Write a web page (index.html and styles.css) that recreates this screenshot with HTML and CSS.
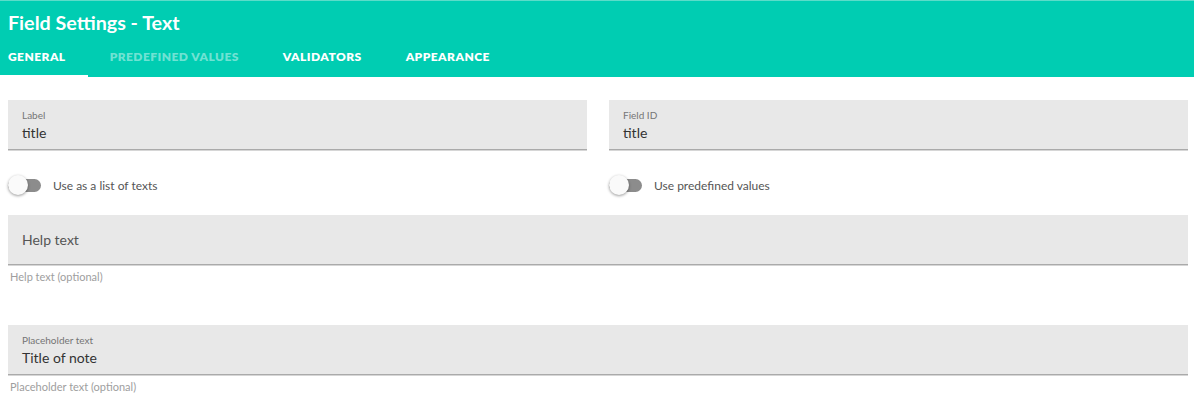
FILE: index.html
```html
<!DOCTYPE html>
<html>
<head>
<meta charset="utf-8">
<link rel="stylesheet" href="styles.css">
</head>
<body>
<div class="page">
  <header class="header">
    <h1 class="title">Field Settings - Text</h1>
    <nav class="tabs">
      <div class="tab active">General</div>
      <div class="tab disabled">Predefined values</div>
      <div class="tab">Validators</div>
      <div class="tab">Appearance</div>
    </nav>
  </header>
  <main class="content">
    <div class="row two">
      <div class="field">
        <div class="field-label">Label</div>
        <div class="field-value">title</div>
      </div>
      <div class="field">
        <div class="field-label">Field ID</div>
        <div class="field-value">title</div>
      </div>
    </div>
    <div class="row two toggles">
      <label class="switch"><span class="track"><span class="thumb"></span></span><span class="switch-text">Use as a list of texts</span></label>
      <label class="switch"><span class="track"><span class="thumb"></span></span><span class="switch-text">Use predefined values</span></label>
    </div>
    <div class="block">
      <div class="field empty">
        <div class="field-placeholder">Help text</div>
      </div>
      <div class="hint">Help text (optional)</div>
    </div>
    <div class="block last">
      <div class="field">
        <div class="field-label">Placeholder text</div>
        <div class="field-value">Title of note</div>
      </div>
      <div class="hint">Placeholder text (optional)</div>
    </div>
  </main>
</div>
</body>
</html>
```
FILE: styles.css
```css
* { box-sizing: border-box; }
html, body { margin: 0; padding: 0; background: #fff; }
body {
  font-family: Lato, "Open Sans", sans-serif;
  color: #333;
  width: 1196px;
  height: 398px;
  overflow: hidden;
}
.page { width: 1196px; }
.header {
  width: 1194px;
  height: 77px;
  background: #00cdb2;
  border-top: 1px solid #5cdcc9;
  display: flex;
  flex-direction: column;
}
.title {
  margin: 0;
  padding: 8px 0 0 8px;
  height: 36px;
  font-size: 19.7px;
  line-height: 27px;
  font-weight: 700;
  color: #fff;
}
.tabs {
  display: flex;
  margin-left: -14px;
  height: 40px;
}
.tab {
  padding: 0 22px;
  font-size: 12px;
  font-weight: 800;
  letter-spacing: 0.45px;
  text-transform: uppercase;
  color: #fff;
  line-height: 39px;
  border-bottom: 2px solid transparent;
}
.tab.active { border-bottom-color: #fff; }
.tab.disabled { color: rgba(255,255,255,0.45); }
.content {
  padding: 23px 8px 0 8px;
  width: 1196px;
}
.row.two {
  display: grid;
  grid-template-columns: 1fr 1fr;
  column-gap: 22px;
  width: 1180px;
}
.field {
  background: #e8e8e8;
  height: 50px;
  border-bottom: 1px solid #aaa;
  box-shadow: 0 1px 0 #d6d6d6;
  padding: 9px 14px 0 14px;
}
.field-label {
  font-size: 10px;
  line-height: 13px;
  color: #757575;
}
.field-value {
  font-size: 14px;
  line-height: 20px;
  margin-top: 1px;
  color: #333;
}
.field.empty { display: flex; align-items: center; padding-top: 0; }
.field-placeholder { font-size: 14px; color: #555; }
.toggles { height: 65px; padding-top: 5px; align-items: center; }
.switch {
  display: flex;
  align-items: center;
  gap: 12px;
  font-size: 12px;
  color: #555;
}
.track {
  position: relative;
  width: 33px;
  height: 13px;
  border-radius: 7px;
  background: #8c8c8c;
}
.thumb {
  position: absolute;
  left: 0;
  top: -4px;
  width: 20px;
  height: 20px;
  border-radius: 50%;
  background: #fafafa;
  box-shadow: 0 1px 3px rgba(0,0,0,0.4);
}
.block { width: 1180px; }
.hint {
  font-size: 11px;
  color: #9e9e9e;
  padding: 5px 0 0 2px;
  line-height: 13px;
  height: 60px;
}
.block.last .hint { height: 23px; }
```
